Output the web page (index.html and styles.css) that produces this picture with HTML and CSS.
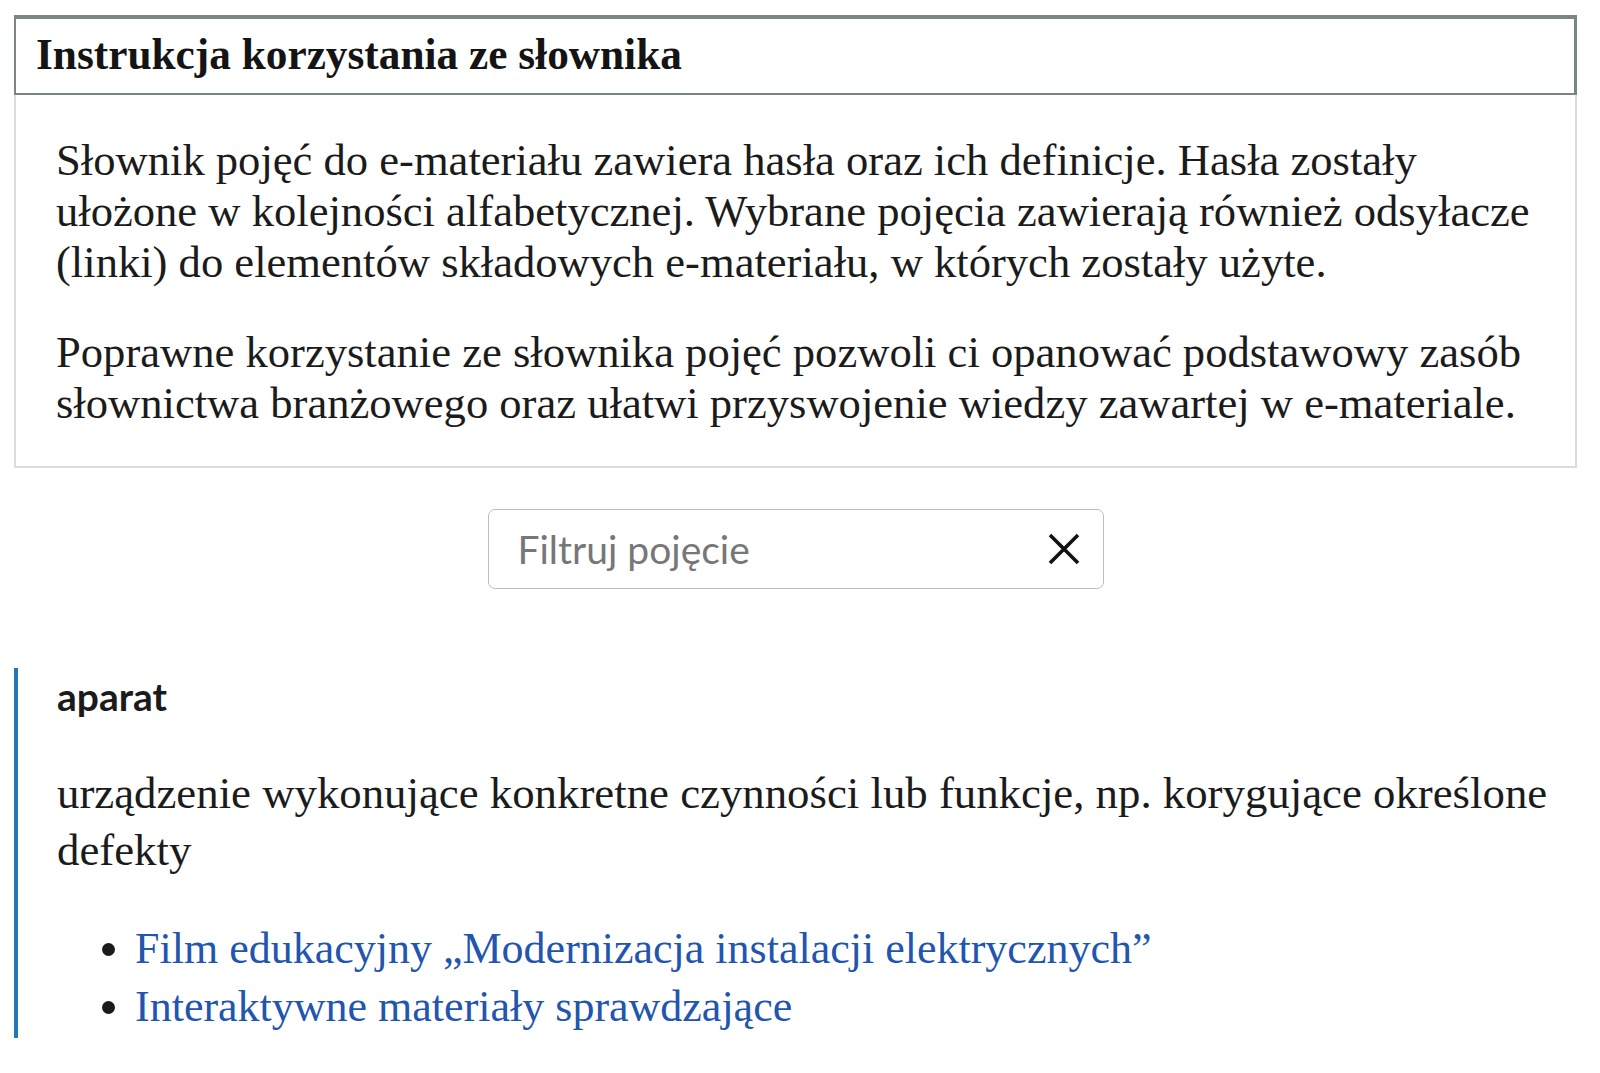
FILE: index.html
```html
<!DOCTYPE html>
<html lang="pl">
<head>
<meta charset="utf-8">
<title>Słownik pojęć</title>
<link rel="stylesheet" href="styles.css">
</head>
<body>
<div class="page">
  <section class="instr">
    <h2 class="instr-title">Instrukcja korzystania ze słownika</h2>
    <div class="instr-body">
      <p>Słownik pojęć do e-materiału zawiera hasła oraz ich definicje. Hasła zostały ułożone w kolejności alfabetycznej. Wybrane pojęcia zawierają również odsyłacze (linki) do elementów składowych e-materiału, w których zostały użyte.</p>
      <p>Poprawne korzystanie ze słownika pojęć pozwoli ci opanować podstawowy zasób słownictwa branżowego oraz ułatwi przyswojenie wiedzy zawartej w e-materiale.</p>
    </div>
  </section>

  <div class="filter">
    <div class="filter-box">
      <input class="filter-input" type="text" placeholder="Filtruj pojęcie">
      <svg class="filter-clear" width="34" height="34" viewBox="0 0 34 34" aria-hidden="true">
        <path d="M3 3 L31 31 M31 3 L3 31" stroke="#111" stroke-width="3.6" fill="none"/>
      </svg>
    </div>
  </div>

  <article class="entry">
    <h3 class="entry-term">aparat</h3>
    <p class="entry-def">urządzenie wykonujące konkretne czynności lub funkcje, np. korygujące określone defekty</p>
    <ul class="entry-links">
      <li><a href="#">Film edukacyjny „Modernizacja instalacji elektrycznych”</a></li>
      <li><a href="#">Interaktywne materiały sprawdzające</a></li>
    </ul>
  </article>
</div>
</body>
</html>
```
FILE: styles.css
```css
html, body {
  margin: 0;
  padding: 0;
  background: #ffffff;
}

body {
  font-family: "Liberation Serif", "Times New Roman", serif;
  color: #1b1b1b;
}

.page {
  padding: 15px 23px 0 14px;
}

.instr {
  border: 2px solid #d9dddd;
  border-top: none;
}

.instr-title {
  margin: 0 -2px;
  border: 2px solid #7b8584;
  border-top-width: 4px;
  border-right-width: 3px;
  height: 80px;
  box-sizing: border-box;
  display: flex;
  align-items: center;
  padding: 0 0 4px 20px;
  font-family: "Liberation Serif", serif;
  font-weight: 700;
  font-size: 43.3px;
  color: #141414;
}

.instr-body {
  padding: 40px 24px 37px 40px;
}

.instr-body p {
  margin: 0 0 39px 0;
  font-size: 44.6px;
  line-height: 51px;
}

.instr-body p:last-child {
  margin-bottom: 0;
}

.filter {
  display: flex;
  justify-content: center;
  padding: 41px 0 0 0;
}

.filter-box {
  width: 616px;
  height: 80px;
  box-sizing: border-box;
  border: 1.5px solid #bdbdbd;
  border-radius: 7px;
  display: flex;
  align-items: center;
  padding: 0 22px 0 29px;
}

.filter-input {
  flex: 1;
  min-width: 0;
  border: none;
  outline: none;
  background: transparent;
  font-family: Lato, "Liberation Sans", sans-serif;
  font-size: 39px;
  color: #333;
  padding: 0;
}

.filter-input::placeholder {
  color: #777777;
}

.filter-clear {
  flex: none;
}

.entry {
  margin-top: 79px;
  border-left: 4px solid #2576b4;
  padding: 0 0 2px 39px;
}

.entry-term {
  margin: 0;
  padding-top: 8px;
  font-family: Lato, "Liberation Sans", sans-serif;
  font-weight: 700;
  font-size: 39px;
  line-height: 40px;
  color: #1b1b1b;
}

.entry-def {
  margin: 49px 0 0 0;
  font-size: 44.8px;
  line-height: 57px;
}

.entry-links {
  margin: 41px 0 0 0;
  padding-left: 78px;
  font-size: 44px;
  line-height: 58px;
}

.entry-links a {
  color: #2255ad;
  text-decoration: none;
}
```
